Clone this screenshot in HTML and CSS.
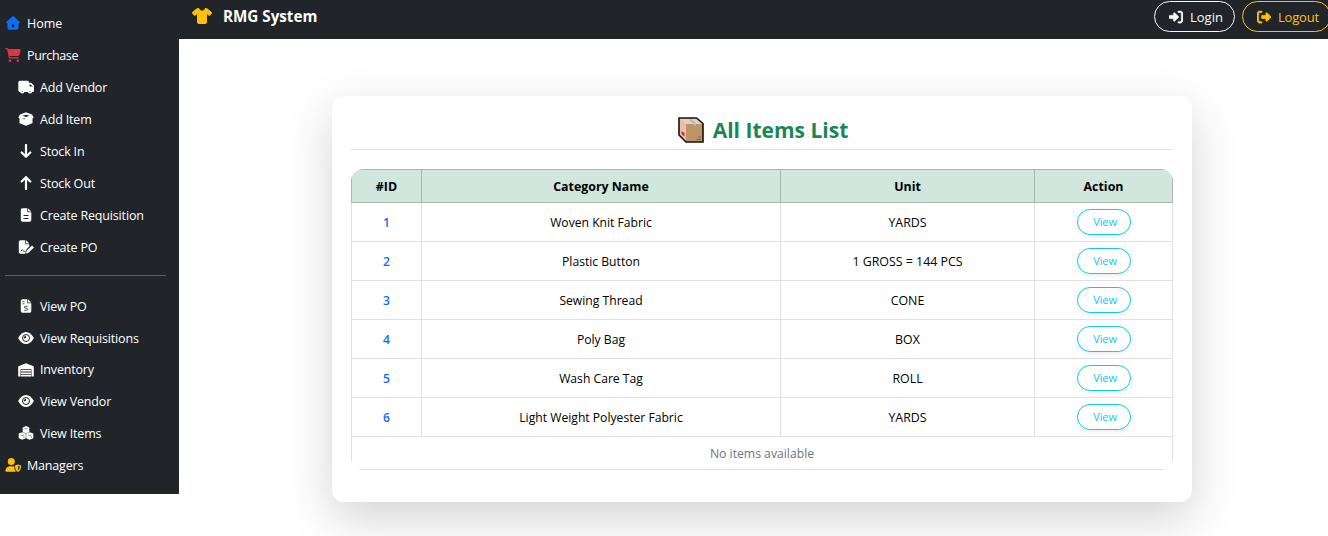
FILE: index.html
```
<!DOCTYPE html>
<html lang="en">
<head>
<meta charset="utf-8">
<title>RMG System</title>
<link rel="stylesheet" href="styles.css">
</head>
<body>
<div class="app">
  <aside class="sidebar">
    <nav class="menu">
      <a class="link home"><svg class="icon" viewBox="0 0 16 14"><path fill-rule="evenodd" d="M7.200.5Q8 0 8.800.5L14.700 6q.5.900-.6 1.200h-.6v4.600q0 1.900-1.900 1.900H4.400q-1.900 0-1.900-1.900V7.200h-.6Q.8 6.900 1.300 6zM7.500 8.300q-.8 0-.8.8v1.600q0 .8.8.8h1q.8 0 .8-.8V9.100q0-.8-.8-.8z"/></svg><span>Home</span></a>
      <a class="link purchase"><svg class="icon" viewBox="0 0 576 512"><path d="M0 24C0 10.700 10.700 0 24 0H69.500c22 0 41.500 12.800 50.600 32h411c26.300 0 45.500 25 38.600 50.400l-41 152.300c-8.500 31.400-37 53.300-69.500 53.300H170.700l5.400 28.500c2.200 11.300 12.100 19.500 23.600 19.500H488c13.300 0 24 10.700 24 24s-10.700 24-24 24H199.700c-34.600 0-64.300-24.600-70.700-58.500L77.400 54.500c-.7-3.800-4-6.500-7.900-6.500H24C10.700 48 0 37.300 0 24zM128 464a48 48 0 1 1 96 0 48 48 0 1 1-96 0zm336-48a48 48 0 1 1 0 96 48 48 0 1 1 0-96z"/></svg><span>Purchase</span></a>
      <a class="link sub"><svg class="icon" viewBox="0 0 16 14"><path fill-rule="evenodd" d="M2 .8h7.500q1.500 0 1.500 1.500v.5h1.500q.8 0 1.300.5l1.600 1.700q.6.600.6 1.300v4.200q0 1.500-1.500 1.500H2Q.3 12 .3 10.300V2.500Q.3.800 2 .8zM11.500 4.500v2h2.900v-.3l-1.700-1.700z"/><circle cx="4.300" cy="11.300" r="2.200"/><circle cx="12" cy="11.300" r="2.200"/><g class="cut"><circle cx="4.300" cy="11.500" r=".5"/><circle cx="12" cy="11.500" r=".5"/></g></svg><span>Add Vendor</span></a>
      <a class="link sub"><svg class="icon" viewBox="0 0 16 14"><path d="M8 .3l6 2.200 1.700 3-1.200 1v3.900q0 .8-.8 1.100L8 13.700l-5.700-2.200q-.8-.3-.8-1.100V6.500l-1.200-1 1.700-3z"/><path class="cut" d="M8 2.700l3.500 1.100L8 4.900 4.500 3.800zM7.600 5.800l-1.200 1.700-2.600-.9 2.400.2z"/></svg><span>Add Item</span></a>
      <a class="link sub"><svg class="icon line" viewBox="0 0 16 14"><path d="M8 1v11.800M3.700 8.500 8 12.800l4.300-4.300"/></svg><span>Stock In</span></a>
      <a class="link sub"><svg class="icon line" viewBox="0 0 16 14"><path d="M8 13V1.200M3.700 5.500 8 1.200l4.300 4.300"/></svg><span>Stock Out</span></a>
      <a class="link sub"><svg class="icon" viewBox="0 0 16 14"><path d="M4.500.3h4.800v3.900h4v7.900q0 1.600-1.600 1.600H4.500q-1.700 0-1.700-1.600V2Q2.800.3 4.500.3zM10 .3l3.300 3.200H10z"/><path class="cutline" d="M5.500 7.500h5M5.500 10.500h5"/></svg><span>Create Requisition</span></a>
      <a class="link sub"><svg class="icon" viewBox="0 0 16 14"><path d="M2.500.3h4.800v3.900h4v2L8 10l-.7 3.700H2.500q-1.700 0-1.700-1.600V2Q.8.300 2.500.3zM8 .3l3.300 3.200H8z"/><path d="M14 5.400l2 2-5.500 5.300-2.500.8.600-2.700z"/><path class="cutline thin" d="M2.800 11.500 4.300 9.500l1.200 1.800h2"/></svg><span>Create PO</span></a>
      <hr class="rule">
      <a class="link sub"><svg class="icon" viewBox="0 0 16 14"><path d="M4.500.3h4.800v3.900h4v7.900q0 1.600-1.600 1.600H4.500q-1.700 0-1.700-1.600V2Q2.800.3 4.500.3zM10 .3l3.300 3.200H10z"/><path class="cutline thin" d="M4.500 2.700h2M4.500 4.800h2M9.700 7.300H7.300q-1 0-1 .9t1.700 1q1.700.1 1.700 1.100t-1 1H6.300"/></svg><span>View PO</span></a>
      <a class="link sub"><svg class="icon" viewBox="0 0 16 14"><path d="M.1 7Q3.500.9 8 .9T15.900 7Q12.500 13.100 8 13.100T.1 7z"/><circle class="ring" cx="8" cy="7" r="3.500"/><path class="cut" d="M8 4.600v1.600q-.1 1-1.100 1H5.600q.2-2.100 2.400-2.600z"/></svg><span>View Requisitions</span></a>
      <a class="link sub snug"><svg class="icon" viewBox="0 0 16 14"><path fill-rule="evenodd" d="M8 .2 15 3q.8.400.8 1.200v9.300h-2.300V6.300H2.500v7.200H.2V4.200Q.2 3.400 1 3zM3 7h10v1.600H3zM3 9.400h10v1.600H3zM3 11.800h10v1.700H3z"/></svg><span>Inventory</span></a>
      <a class="link sub"><svg class="icon" viewBox="0 0 16 14"><path d="M.1 7Q3.500.9 8 .9T15.900 7Q12.500 13.100 8 13.100T.1 7z"/><circle class="ring" cx="8" cy="7" r="3.500"/><path class="cut" d="M8 4.600v1.600q-.1 1-1.100 1H5.600q.2-2.100 2.400-2.600z"/></svg><span>View Vendor</span></a>
      <a class="link sub"><svg class="icon" viewBox="0 0 16 14"><path d="M8 .1l3.300 1.300v4.500L8 7.300 4.700 5.900V1.400zM4.300 6.200l3.500 1.400v4.700l-3.500 1.500L.7 12.300V7.600zM11.700 6.200l3.600 1.400v4.700l-3.600 1.500-3.500-1.500V7.600z"/><path class="cutline fine" d="M6.500 2.400 8 3l1.500-.6M2.700 8.900l1.600.7 1.600-.7M10.100 8.900l1.600.7 1.600-.7M5.900 10.200v1.600M13.300 10.200v1.600"/></svg><span>View Items</span></a>
      <a class="link managers"><svg class="icon" viewBox="0 0 16 14"><circle cx="6.300" cy="3.600" r="3.500"/><path d="M4.700 8.200h3.200q1 0 1.700.4l-.2 1.300q.1 2.300 1.600 3.900H1.200q-.8 0-.8-.8.2-4.200 4.300-4.800z"/><path fill-rule="evenodd" d="M13 6.500l3 1.100q.1 4.700-3 6.300-3.100-1.600-3-6.300zM13 8v4.300q1.700-1.200 1.700-3.700z"/></svg><span>Managers</span></a>
    </nav>
  </aside>
  <div class="main">
    <header class="navbar">
      <div class="brand"><svg class="shirt" viewBox="0 0 640 512"><path d="M211.800 0c7.800 0 14.300 5.700 16.700 13.200C240.800 51.900 277.100 80 320 80s79.200-28.100 91.500-66.800C413.900 5.700 420.400 0 428.200 0h12.600c22.500 0 44.200 7.900 61.500 22.300L628.500 127.400c6.600 5.500 10.700 13.500 11.400 22.100s-2.100 17.100-7.800 23.600l-56 64c-11.400 13.100-31.200 14.600-44.600 3.500L480 197.700V448c0 35.300-28.700 64-64 64H224c-35.300 0-64-28.700-64-64V197.700l-51.500 42.900c-13.300 11.100-33.100 9.600-44.600-3.500l-56-64c-5.700-6.500-8.500-15-7.800-23.600s4.800-16.600 11.400-22.100L137.700 22.300C155 7.900 176.700 0 199.200 0h12.600z"/></svg><span>RMG System</span></div>
      <div class="account">
        <a class="pill login"><svg class="pill-icon" viewBox="0 0 512 512"><path d="M217.900 105.900L340.700 228.700c7.200 7.200 11.300 17.100 11.300 27.300s-4.100 20.100-11.300 27.300L217.900 406.100c-6.400 6.400-15 9.900-24 9.900c-18.700 0-33.900-15.200-33.900-33.900l0-62.100L32 320c-17.700 0-32-14.300-32-32l0-64c0-17.700 14.300-32 32-32l128 0 0-62.100c0-18.700 15.200-33.900 33.900-33.900c9 0 17.600 3.600 24 9.900zM352 416l64 0c17.700 0 32-14.300 32-32l0-256c0-17.700-14.300-32-32-32l-64 0c-17.700 0-32-14.300-32-32s14.300-32 32-32l64 0c53 0 96 43 96 96l0 256c0 53-43 96-96 96l-64 0c-17.700 0-32-14.300-32-32s14.300-32 32-32z"/></svg><span>Login</span></a>
        <a class="pill logout"><svg class="pill-icon" viewBox="0 0 512 512"><path d="M377.900 105.900L500.700 228.700c7.200 7.200 11.300 17.100 11.300 27.300s-4.100 20.100-11.300 27.300L377.900 406.100c-6.400 6.400-15 9.900-24 9.900c-18.700 0-33.900-15.200-33.900-33.900l0-62.100-128 0c-17.700 0-32-14.300-32-32l0-64c0-17.700 14.300-32 32-32l128 0 0-62.100c0-18.700 15.200-33.900 33.900-33.900c9 0 17.600 3.600 24 9.900zM160 96L96 96c-17.700 0-32 14.300-32 32l0 256c0 17.700 14.300 32 32 32l64 0c17.700 0 32 14.300 32 32s-14.300 32-32 32l-64 0c-53 0-96-43-96-96L0 128C0 75 43 32 96 32l64 0c17.700 0 32 14.300 32 32s-14.300 32-32 32z"/></svg><span>Logout</span></a>
      </div>
    </header>
    <main class="card">
      <h1 class="title"><svg class="box" viewBox="0 0 26 26"><path d="M1 1h17.500l6.500 5.500V25H8l-7-7z" fill="#edcdb8"/><path d="M1 1l7 6v18l-7-7z" fill="#e5c1a9"/><path d="M8 7h17v18H8z" fill="#bd9368"/><path d="M10 1.500h3l5 5v3l-2-1.500z" fill="#b6bdc7"/><path d="M3.500 14l3 2v3.500l-3-2.300z" fill="#e5272f"/><path d="M20 20h3M18.500 22.500H23" stroke="#80603e"/><path d="M1 1h17.500l6.500 5.500V25H8l-7-7z" fill="none" stroke="#111" stroke-width="1.600"/></svg><span>All Items List</span></h1>
      <div class="table-wrap">
        <table class="items">
          <colgroup><col class="c-id"><col class="c-name"><col class="c-unit"><col class="c-action"></colgroup>
          <thead><tr><th>#ID</th><th>Category Name</th><th>Unit</th><th>Action</th></tr></thead>
          <tbody>
            <tr><td class="id">1</td><td>Woven Knit Fabric</td><td class="unit">YARDS</td><td><a class="view">View</a></td></tr>
            <tr><td class="id">2</td><td>Plastic Button</td><td class="unit">1 GROSS = 144 PCS</td><td><a class="view">View</a></td></tr>
            <tr><td class="id">3</td><td>Sewing Thread</td><td class="unit">CONE</td><td><a class="view">View</a></td></tr>
            <tr><td class="id">4</td><td>Poly Bag</td><td class="unit">BOX</td><td><a class="view">View</a></td></tr>
            <tr><td class="id">5</td><td>Wash Care Tag</td><td class="unit">ROLL</td><td><a class="view">View</a></td></tr>
            <tr><td class="id">6</td><td>Light Weight Polyester Fabric</td><td class="unit">YARDS</td><td><a class="view">View</a></td></tr>
            <tr class="empty"><td colspan="4">No items available</td></tr>
          </tbody>
        </table>
      </div>
    </main>
  </div>
</div>
</body>
</html>
```
FILE: styles.css
```
* { box-sizing: border-box; }
body {
  margin: 0;
  height: 536px;
  overflow: hidden;
  background: #fff;
  font-family: "Open Sans", "Noto Sans", sans-serif;
  font-size: 12.5px;
  color: #000;
}
.app { display: flex; align-items: flex-start; }

.sidebar {
  flex: 0 0 179px;
  height: 494px;
  padding: 7px 13px 0 5px;
  background: #212529;
}
.menu { display: flex; flex-direction: column; }
.link {
  display: flex;
  align-items: center;
  gap: 6px;
  height: 32px;
  color: #fff;
  letter-spacing: -0.17px;
  white-space: nowrap;
}
.home { letter-spacing: 0; }
.purchase { letter-spacing: -0.4px; }
.purchase { letter-spacing: -0.35px; }
.sub { padding-left: 13px; }
.snug { height: 31px; }
.icon { width: 16px; height: 14px; fill: #fff; flex: none; }
.home .icon { fill: #0d6efd; }
.purchase .icon { fill: #dc3545; }
.managers .icon { fill: #ffc107; }
.icon.line { fill: none; stroke: #fff; stroke-width: 2.2; stroke-linecap: round; stroke-linejoin: round; }
.cut { fill: #212529; }
.cutline { fill: none; stroke: #212529; stroke-width: 1; }
.thin { stroke-width: .8; }
.fine { stroke-width: .5; }
.ring { fill: none; stroke: #212529; stroke-width: 1; }
.rule { width: 161px; height: 1px; margin: 12px 0 14px; border: 0; background: #5b5e61; }

.main { flex: 1; min-width: 0; }
.navbar {
  display: flex;
  align-items: flex-start;
  justify-content: space-between;
  height: 39px;
  padding-left: 13px;
  background: #212529;
}
.brand {
  display: flex;
  align-items: center;
  gap: 11px;
  height: 32px;
  color: #fff;
  font-size: 15.2px;
  font-weight: 700;
}
.shirt { width: 20px; height: 16px; fill: #ffc107; }
.account { display: flex; gap: 7px; margin: 1px -3px 0 0; }
.pill {
  display: flex;
  align-items: center;
  gap: 7px;
  height: 31px;
  padding-left: 14px;
  border: 1px solid;
  border-radius: 16px;
  font-size: 13px;
}
.pill-icon { width: 14px; height: 14px; fill: currentColor; stroke: currentColor; stroke-width: 14; }
.login { width: 81px; color: #f8f9fa; }
.logout { width: 89px; color: #ffc107; letter-spacing: -0.2px; }

.card {
  width: 860px;
  height: 406px;
  margin: 57px 0 0 153px;
  padding: 19px;
  border-radius: 12px;
  background: #fff;
  box-shadow: 0 16px 48px rgba(0, 0, 0, .175);
}
.title {
  display: flex;
  align-items: flex-start;
  justify-content: center;
  gap: 9px;
  height: 35px;
  margin: 0 0 19px;
  padding-left: 2px;
  border-bottom: 1px solid #dee2e6;
  color: #198754;
  font-size: 21px;
  font-weight: 700;
  line-height: 31px;
}
.box { width: 26px; height: 26px; margin-top: 2px; }
.table-wrap { height: 301px; border-radius: 12px; overflow: hidden; }
.items { width: 822px; table-layout: fixed; border-collapse: collapse; text-align: center; }
.c-id { width: 70px; }
.c-name { width: 359px; }
.c-unit { width: 254px; }
.items th, .items td { height: 39px; padding: 0; border: 1px solid #dee2e6; }
.items th { height: 33px; border-color: #a7b9b1; background: #d1e7dd; font-size: 12.400px; font-weight: 700; }
.items td { font-size: 12.150px; }
.items .unit { font-size: 12.400px; }
.items .id { color: #0d6efd; font-weight: 600; }
.items .empty td { height: 33px; color: #6c757d; font-size: 12.200px; }
.view {
  display: block;
  width: 54px;
  height: 26px;
  margin: 0 auto;
  padding-left: 3px;
  border: 1px solid #0dcaf0;
  border-radius: 13px;
  box-shadow: 0 2px 4px rgba(0, 0, 0, .075);
  color: #0dcaf0;
  font-size: 11px;
  letter-spacing: -0.1px;
  line-height: 24px;
}
```
